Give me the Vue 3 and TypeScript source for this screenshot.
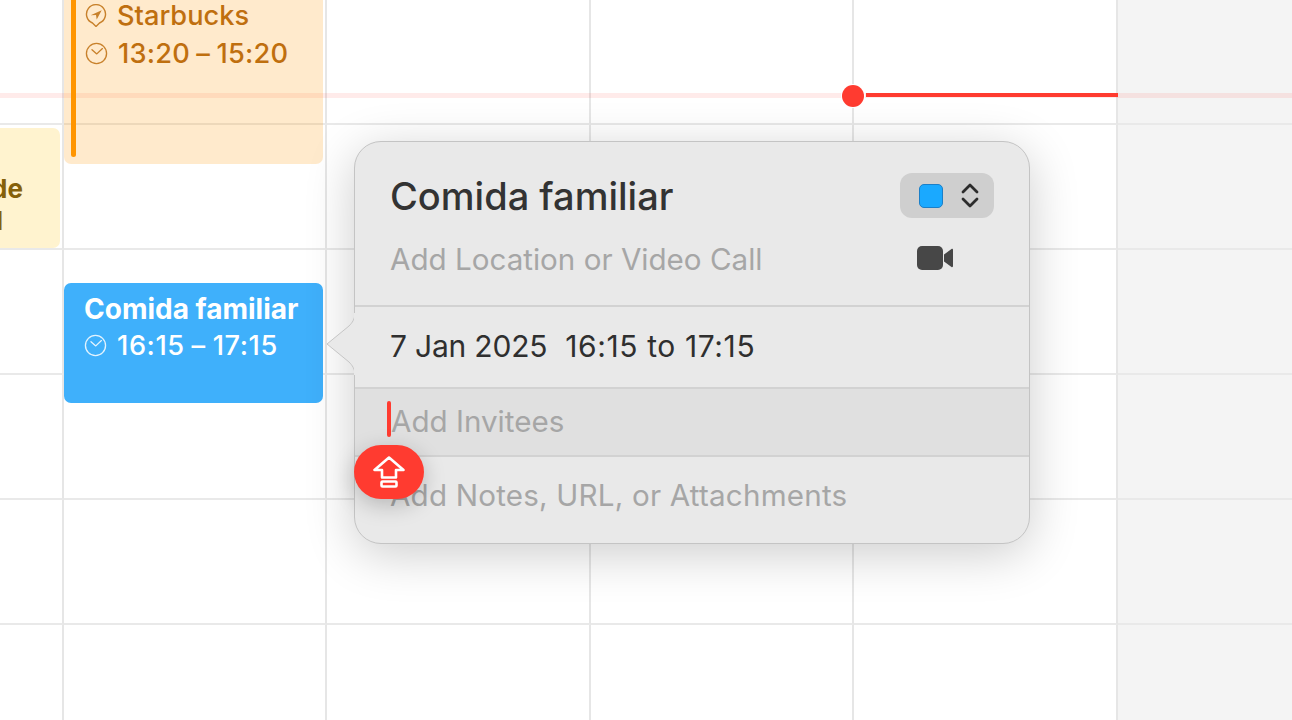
<script setup lang="ts">
const columns = [64, 263, 264, 263, 264, 174];
const rows = [125, 125, 125, 125, 125, 97];
const cells = rows.flatMap((_, r) => columns.map((_, c) => ({ key: `${r}-${c}`, off: c === 5 })));
</script>

<template>
	<div class="calendar">
		<div class="grid">
			<div v-for="cell in cells" :key="cell.key" class="cell" :class="{ off: cell.off }"></div>
		</div>

		<div class="now-faint"></div>
		<div class="now-line"></div>
		<div class="now-dot"></div>

		<div class="event orange">
			<div class="event-row">
				<svg class="glyph" viewBox="0 0 23 23" fill="none" stroke="currentColor" stroke-width="1.4">
					<path d="M11 22.500L7.500 19A9.500 9.500 0 1 1 14.500 19z" stroke-linejoin="round" />
					<path d="M16.700 6.200L5.700 11.200 11 11l.7 4.500z" fill="currentColor" stroke="none" />
				</svg>
				<span>Starbucks</span>
			</div>
			<div class="event-row">
				<svg class="glyph" viewBox="0 0 24 24" fill="none" stroke="currentColor" stroke-width="1.4" stroke-linecap="round" stroke-linejoin="round">
					<circle cx="12" cy="12" r="10.500" />
					<path d="M7.300 8l5 4.400 5.900-5.500" />
				</svg>
				<span class="times">13:20 – 15:20</span>
			</div>
		</div>

		<div class="event yellow">
			<div class="yellow-text">
				<div class="line-de">de</div>
				<div class="line-l">l</div>
			</div>
		</div>

		<div class="event blue">
			<div class="blue-title">Comida familiar</div>
			<div class="event-row">
				<svg class="glyph" viewBox="0 0 24 24" fill="none" stroke="currentColor" stroke-width="1.4" stroke-linecap="round" stroke-linejoin="round">
					<circle cx="12" cy="12" r="10.500" />
					<path d="M7.300 8l5 4.400 5.900-5.500" />
				</svg>
				<span class="times">16:15 – 17:15</span>
			</div>
		</div>

		<div class="popover">
			<svg class="notch" viewBox="0 0 30 62">
				<path d="M30 0C30 6 27 10 24 13L2 31 24 49C27 52 30 56 30 62z" fill="#e9e9e9" stroke="#c6c6c6" stroke-width="1" />
				<path d="M30 0V62" stroke="#e9e9e9" stroke-width="2" />
			</svg>

			<section class="head">
				<div class="title-row">
					<h1>Comida familiar</h1>
					<div class="picker">
						<span class="swatch"></span>
						<svg class="chevrons" viewBox="0 0 18 25" fill="none" stroke="#2c2c2c" stroke-width="2.800" stroke-linecap="round" stroke-linejoin="round">
							<path d="M2 9l7-7 7 7" />
							<path d="M2 16l7 7 7-7" />
						</svg>
					</div>
				</div>
				<div class="location-row">
					<span class="hint">Add Location or Video Call</span>
					<svg class="camera" viewBox="0 0 36 24">
						<rect x="0" y="0" width="26" height="24" rx="5" fill="#474747" />
						<path d="M27 8.500l7.500-5.500c.7-.5 1.500 0 1.500 1v16c0 1-.8 1.500-1.500 1L27 15.500z" fill="#474747" />
					</svg>
				</div>
			</section>

			<section class="date">
				<span class="day">7 Jan 2025</span>
				<span class="range">16:15 to 17:15</span>
			</section>
			<section class="invitees">
				<span class="caret"></span>
				<span class="hint">Add Invitees</span>
			</section>
			<section class="notes"><span class="hint">Add Notes, URL, or Attachments</span></section>
		</div>

		<div class="caps-badge">
			<svg viewBox="0 0 32 32" fill="none" stroke="#fff" stroke-width="2.600" stroke-linejoin="round">
				<path d="M16 1.500L1.500 14h7.500v7.500h14V14h7.500z" />
				<rect x="8.500" y="25.500" width="15" height="5" rx="1" />
			</svg>
		</div>
	</div>
</template>

<style scoped>
.calendar {
	position: relative;
	width: 1292px;
	height: 720px;
	overflow: hidden;
	background: #fff;
	font-family: Inter, "Liberation Sans", sans-serif;
}

.grid {
	display: grid;
	grid-template-columns: 64px 263px 264px 263px 264px 174px;
	grid-template-rows: 125px 125px 125px 125px 125px 97px;
	height: 722px;
}

.cell {
	border-right: 2px solid #e6e6e6;
	border-bottom: 2px solid #e9e9e9;
}

.cell.off {
	background: #f4f4f4;
	border-right: 0;
}

.now-faint {
	position: absolute;
	left: 0;
	right: 0;
	top: 93px;
	height: 5px;
	background: rgba(255, 59, 48, 0.1);
}

.now-line {
	position: absolute;
	left: 866px;
	top: 93px;
	width: 252px;
	height: 4px;
	background: #ff3b30;
}

.now-dot {
	position: absolute;
	left: 842px;
	top: 85px;
	width: 22px;
	height: 22px;
	border-radius: 50%;
	background: #ff3b30;
	box-shadow: 0 0 0 1px #fff;
}

.event {
	position: absolute;
	box-sizing: border-box;
	border-radius: 7px;
}

.orange {
	left: 64px;
	top: -40px;
	width: 259px;
	height: 204px;
	padding: 37px 0 0 21px;
	background: rgba(255, 149, 0, 0.2);
	color: #bf6f0f;
}

.orange .event-row:first-child {
	margin-bottom: 1px;
}

.orange::before {
	content: "";
	position: absolute;
	left: 7px;
	top: 0;
	bottom: 7px;
	width: 5px;
	border-radius: 3px;
	background: #ff9500;
}

.event-row {
	display: flex;
	align-items: center;
	gap: 9px;
	height: 37px;
	font-size: 27.200px;
	font-weight: 500;
}

.glyph {
	flex: none;
	width: 23px;
	height: 23px;
	opacity: 0.85;
}

.times {
	margin-left: 1px;
	word-spacing: -1px;
	letter-spacing: 0.2px;
}

.blue .times {
	letter-spacing: 0.6px;
}

.yellow {
	left: -20px;
	top: 128px;
	width: 80px;
	height: 120px;
	background: #fff3cf;
	color: #85600a;
}

.yellow-text {
	position: absolute;
	left: 20px;
	top: 45px;
	font-size: 26px;
	line-height: 32px;
	font-weight: 700;
}

.line-de {
	margin-left: -9px;
}

.line-l {
	margin-left: -4px;
}

.blue {
	left: 64px;
	top: 283px;
	width: 259px;
	height: 120px;
	padding: 8px 0 0 20px;
	background: #3fb0fb;
	color: #fff;
}

.blue-title {
	font-size: 28px;
	font-weight: 700;
	line-height: 36px;
}

.popover {
	position: absolute;
	left: 354px;
	top: 141px;
	width: 676px;
	height: 403px;
	box-sizing: border-box;
	border: 1px solid #c4c4c4;
	border-radius: 27px;
	background: #e9e9e9;
	box-shadow: 0 10px 50px rgba(0, 0, 0, 0.2);
	color: #333;
	display: flex;
	flex-direction: column;
}

.notch {
	position: absolute;
	left: -30px;
	top: 171px;
	width: 30px;
	height: 62px;
}

.head {
	height: 165px;
	box-sizing: border-box;
	padding: 31px 35px 0;
	border-bottom: 2px solid #d2d2d2;
}

.title-row,
.location-row {
	display: flex;
	align-items: center;
	justify-content: space-between;
}

h1 {
	margin: 0;
	font-size: 38px;
	font-weight: 500;
	line-height: 44px;
	color: #333;
}

.picker {
	display: flex;
	align-items: center;
	gap: 18px;
	box-sizing: border-box;
	width: 94px;
	height: 45px;
	padding-left: 19px;
	border-radius: 12px;
	background: #cfcfcf;
}

.swatch {
	width: 24px;
	height: 24px;
	border-radius: 5px;
	background: #1aa9ff;
	border: 1px solid #1b7fc8;
	box-sizing: border-box;
}

.chevrons {
	width: 18px;
	height: 25px;
}

.location-row {
	margin-top: 21px;
	padding-right: 41px;
	height: 40px;
}

.camera {
	width: 36px;
	height: 24px;
	margin-top: -2px;
}

.hint {
	font-size: 29.600px;
	color: #a6a6a6;
}

.date {
	height: 82px;
	box-sizing: border-box;
	padding: 0 0 2px 35px;
	display: flex;
	align-items: center;
	gap: 18px;
	font-size: 30px;
	color: #2f2f2f;
	border-bottom: 2px solid #d2d2d2;
}

.day {
	letter-spacing: -0.2px;
}

.range {
	letter-spacing: 0.6px;
}

.invitees {
	position: relative;
	height: 68px;
	box-sizing: border-box;
	padding: 0 0 2px 36px;
	display: flex;
	align-items: center;
	background: #e0e0e0;
	border-bottom: 2px solid #d2d2d2;
}

.caret {
	position: absolute;
	left: 32px;
	top: 12px;
	width: 4px;
	height: 36px;
	border-radius: 2px;
	background: #ff3b30;
}

.notes {
	flex: 1;
	padding: 20px 0 0 35px;
}

.notes .hint {
	letter-spacing: 0.2px;
}

.caps-badge {
	position: absolute;
	left: 354px;
	top: 445px;
	width: 70px;
	height: 54px;
	border-radius: 27px;
	background: #ff3b30;
	box-shadow: 0 6px 22px rgba(0, 0, 0, 0.22);
	display: flex;
	align-items: center;
	justify-content: center;
}

.caps-badge svg {
	width: 32px;
	height: 32px;
}
</style>
